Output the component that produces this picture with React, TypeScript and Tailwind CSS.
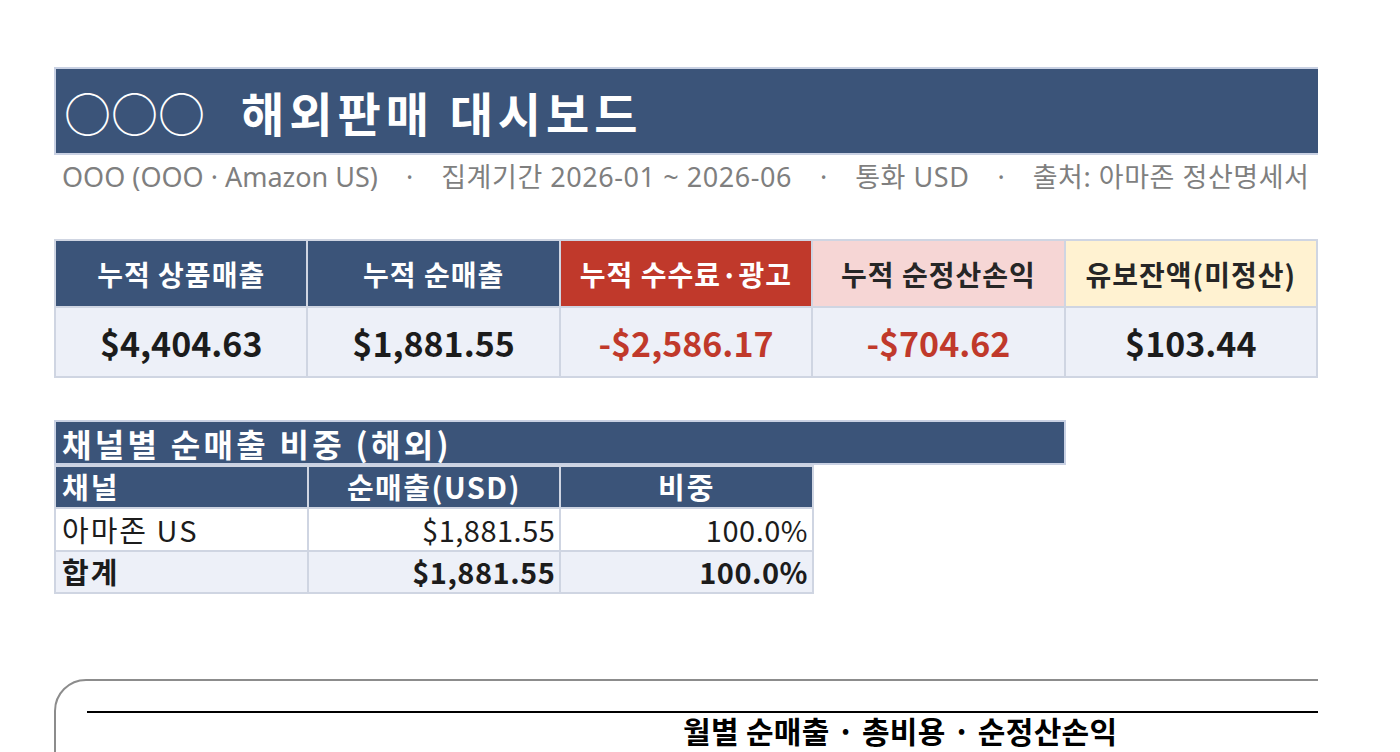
import React from "react";

const kpis = [
  { label: "누적 상품매출", value: "$4,404.63", head: "bg-[#3b5479] text-white", val: "text-[#1c1c1c]" },
  { label: "누적 순매출", value: "$1,881.55", head: "bg-[#3b5479] text-white", val: "text-[#1c1c1c]" },
  { label: "누적 수수료·광고", value: "-$2,586.17", head: "bg-[#c0392b] text-white", val: "text-[#c0392b]" },
  { label: "누적 순정산손익", value: "-$704.62", head: "bg-[#f6d6d5] text-[#262626]", val: "text-[#c0392b]" },
  { label: "유보잔액(미정산)", value: "$103.44", head: "bg-[#fff2d1] text-[#262626]", val: "text-[#1c1c1c]" },
];

const subtitle = ["OOO (OOO · Amazon US)", "집계기간 2026-01 ~ 2026-06", "통화 USD", "출처: 아마존 정산명세서"];

const channels = [{ name: "아마존 US", sales: "$1,881.55", share: "100.0%" }];

export default function App() {
  return (
    <div className="h-[752px] w-[1400px] bg-white overflow-hidden font-['Noto_Sans','Noto_Sans_CJK_KR',sans-serif]">
      <div className="w-[1318px] h-full overflow-hidden pl-[54px] pt-[67px]">
        {/* Title */}
        <div className="w-[1266px] h-[88px] border-2 border-[#c9d1e3] bg-[#3b5479] flex items-center pl-[8px] text-white font-['Noto_Sans_CJK_KR',sans-serif]">
          <span className="text-[47px] font-normal leading-none">○○○</span>
          <span className="ml-[36px] text-[47px] font-bold leading-none tracking-[5px]">해외판매 대시보드</span>
        </div>

        {/* Subtitle */}
        <div className="h-[45px] flex items-center pl-[8px] whitespace-nowrap text-[27px] text-[#7f7f7f]">
          {subtitle.map((s, i) => (
            <React.Fragment key={s}>
              {i > 0 && <span className="mx-[28px]">·</span>}
              <span className={i > 0 ? "tracking-[0.55px]" : ""}>{s}</span>
            </React.Fragment>
          ))}
        </div>

        {/* KPI table */}
        <div className="mt-[39px] w-[1264px] grid grid-cols-5 grid-rows-[65px_68px] gap-[2px] p-[2px] bg-[#cfd5e2] font-['Noto_Sans_CJK_KR',sans-serif]">
          {kpis.map((k) => (
            <div key={k.label} className={`flex items-center justify-center text-[28px] font-bold tracking-[1px] ${k.head}`}>
              {k.label}
            </div>
          ))}
          {kpis.map((k) => (
            <div key={k.value} className={`flex items-center justify-center bg-[#edf0f8] text-[34px] font-bold ${k.val}`}>
              {k.value}
            </div>
          ))}
        </div>

        {/* Channel share */}
        <div className="mt-[42px] font-['Noto_Sans_CJK_KR',sans-serif]">
          <div className="w-[1012px] h-[45px] border-2 border-[#c9d1e3] bg-[#3b5479] flex items-center pl-[6px] text-white text-[32px] font-bold tracking-[3.3px]">
            채널별 순매출 비중 (해외)
          </div>
          <div className="w-[760px] grid grid-cols-3 grid-rows-[40px_41px_40px] gap-[2px] p-[2px] bg-[#cfd5e2] text-[29px] tracking-[0.5px]">
            <div className="bg-[#3b5479] text-white font-bold flex items-center pl-[6px] tracking-[2px]">채널</div>
            <div className="bg-[#3b5479] text-white font-bold flex items-center justify-center tracking-[1.5px]">순매출(USD)</div>
            <div className="bg-[#3b5479] text-white font-bold flex items-center justify-center tracking-[2px]">비중</div>
            {channels.map((c) => (
              <React.Fragment key={c.name}>
                <div className="bg-white text-[#1c1c1c] flex items-center pl-[6px] tracking-[2px]">{c.name}</div>
                <div className="bg-white text-[#1c1c1c] flex items-center justify-end pr-[4px]">{c.sales}</div>
                <div className="bg-white text-[#1c1c1c] flex items-center justify-end pr-[4px]">{c.share}</div>
              </React.Fragment>
            ))}
            <div className="bg-[#edf0f8] text-[#1c1c1c] font-bold flex items-center pl-[6px] tracking-[2px]">합계</div>
            <div className="bg-[#edf0f8] text-[#1c1c1c] font-bold flex items-center justify-end pr-[4px]">$1,881.55</div>
            <div className="bg-[#edf0f8] text-[#1c1c1c] font-bold flex items-center justify-end pr-[4px]">100.0%</div>
          </div>
        </div>

        {/* Chart */}
        <div className="mt-[85px] w-[1400px] h-[200px] border-2 border-[#8c8c8c] rounded-tl-[32px] rounded-tr-[32px] pt-[30px] pl-[31px]">
          <div className="h-[2px] bg-black" />
          <div className="pl-[596px] text-[30px] font-bold leading-[34px] text-black font-['Noto_Sans_CJK_KR',sans-serif] tracking-[0.3px]">
            월별 순매출 · 총비용 · 순정산손익
          </div>
        </div>
      </div>
    </div>
  );
}
